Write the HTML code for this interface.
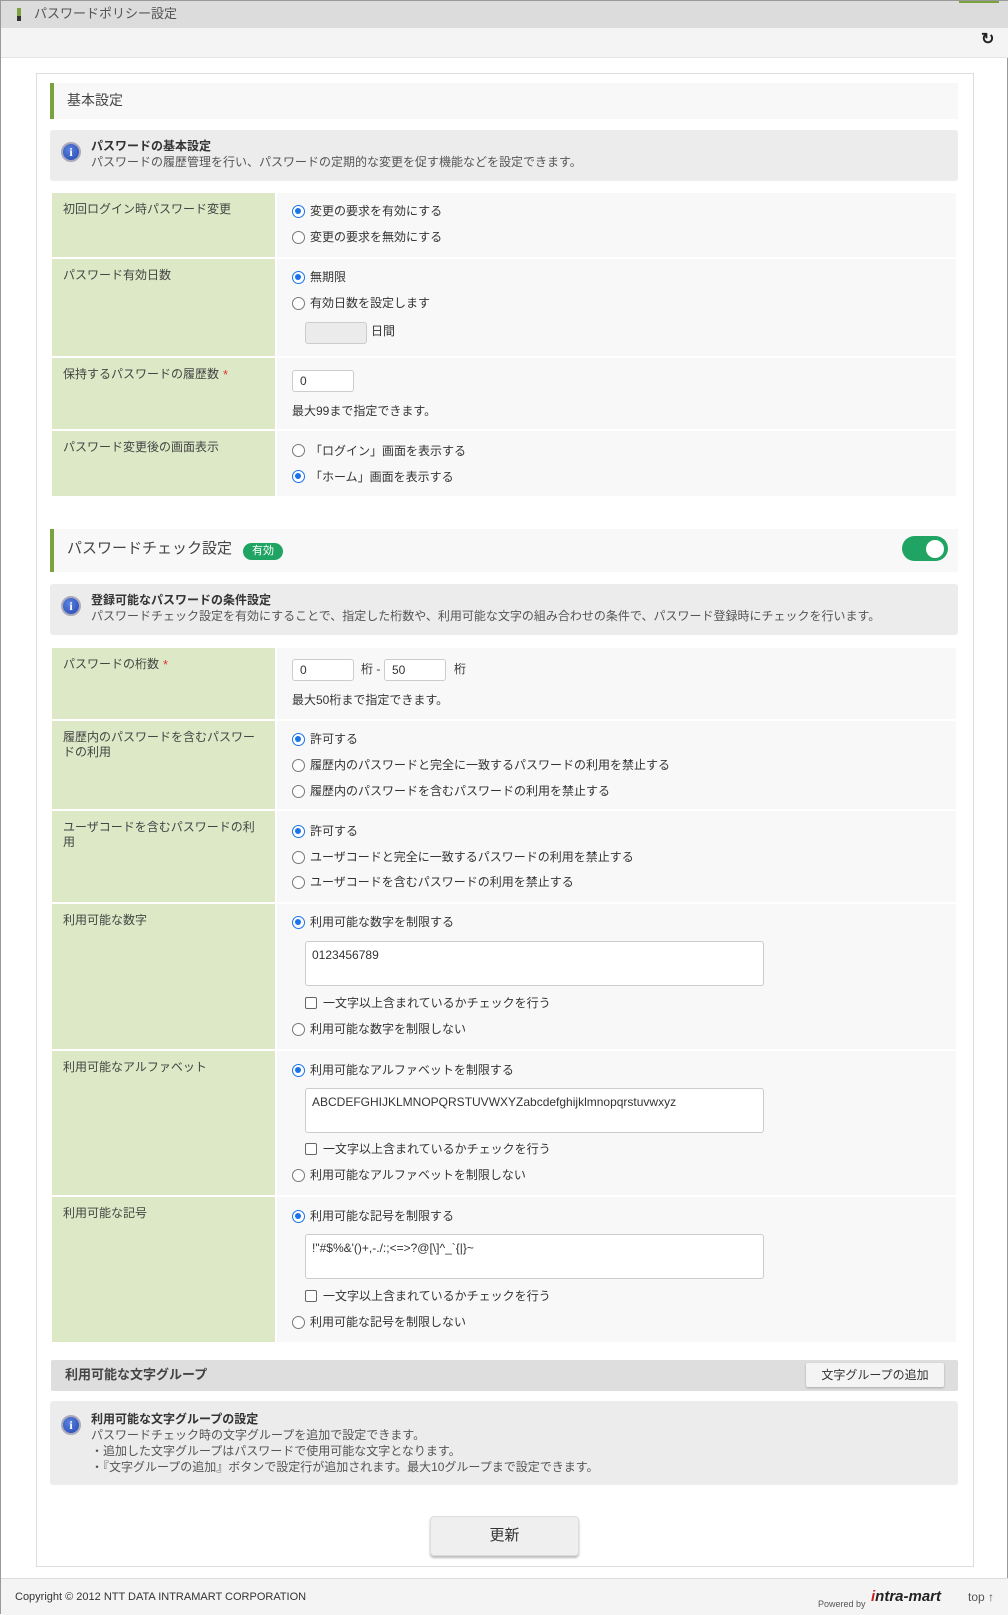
<!DOCTYPE html>
<html><head><meta charset="utf-8">
<style>
*{box-sizing:border-box;margin:0;padding:0}
body{width:1008px;height:1614px;position:relative;background:#fff;font-family:"Liberation Sans","Noto Sans CJK JP",sans-serif;font-size:12px;color:#333;overflow:hidden;border:1px solid #999}
.a{position:absolute}
.t{position:absolute;white-space:nowrap;line-height:14px}
.lab{position:absolute;left:51px;width:223px;background:#dde9c6}
.val{position:absolute;left:276px;width:679px;background:#f8f8f8}
.lt{position:absolute;left:11px;top:9px;line-height:15px;color:#444;font-size:12px}
.rd{position:absolute;width:13px;height:13px;border-radius:50%;border:1px solid #777;background:#fff}
.rd.on{border:1.5px solid #1a73e8}
.rd.on:after{content:"";position:absolute;left:2px;top:2px;width:6px;height:6px;border-radius:50%;background:#1a73e8}
.cb{position:absolute;width:12px;height:12px;border:1px solid #666;border-radius:2px;background:#fff}
.in{position:absolute;height:22px;border:1px solid #ccc;border-radius:3px;background:#fff;padding:3px 7px;line-height:14px;font-size:12px}
.ta{position:absolute;left:304px;width:459px;height:45px;border:1px solid #ccc;border-radius:3px;background:#fff;padding:6px 6px;font-size:12px}
.info{position:absolute;left:49px;width:908px;background:#ececec;border-radius:3px}
.ic{position:absolute;width:20px;height:20px;border-radius:50%;background:radial-gradient(circle at 40% 35%,#5a82e0,#2446b0);border:2px solid #aab;color:#fff;font:bold 12px/16px "Liberation Serif",serif;text-align:center}
.sh{position:absolute;left:49px;width:908px;background:#f8f8f8;border-left:4px solid #7aa33f}
.star{color:#d33;font-size:13px;margin-left:4px;vertical-align:top}
</style></head><body>
<!-- top bar -->
<div class="a" style="left:0;top:0;width:1008px;height:27px;background:#dcdcdc"></div>
<div class="a" style="left:16px;top:7px;width:4px;height:8px;background:#7aa33f"></div>
<div class="a" style="left:16px;top:15px;width:4px;height:5px;background:#333"></div>
<div class="t" style="left:33px;top:6px;font-size:13px;color:#555">パスワードポリシー設定</div>
<div class="a" style="left:958px;top:0;width:40px;height:2px;background:#7aa33f"></div>
<div class="a" style="left:0;top:27px;width:1008px;height:30px;background:#f4f4f4;border-bottom:1px solid #e4e4e4"></div>
<div class="t" style="left:980px;top:32px;font-size:16px;font-weight:bold;color:#222">&#x21bb;</div>
<!-- panel -->
<div class="a" style="left:35px;top:72px;width:938px;height:1494px;border:1px solid #ddd;background:#fff"></div>

<div class="sh" style="top:82px;height:36px"><div class="t" style="left:13px;top:10px;font-size:14px;color:#444">基本設定</div></div>
<div class="info" style="top:129px;height:51px">
 <div class="ic" style="left:11px;top:12px">i</div>
 <div class="t" style="left:41px;top:9px;font-weight:bold">パスワードの基本設定</div>
 <div class="t" style="left:41px;top:25px;color:#555">パスワードの履歴管理を行い、パスワードの定期的な変更を促す機能などを設定できます。</div>
</div>

<!-- rows 1 -->
<div class="lab" style="top:192px;height:64px"><div class="lt">初回ログイン時パスワード変更</div></div>
<div class="val" style="top:192px;height:64px"></div>
<div class="rd on" style="left:291px;top:204px"></div><div class="t" style="left:309px;top:203px">変更の要求を有効にする</div>
<div class="rd" style="left:291px;top:230px"></div><div class="t" style="left:309px;top:229px">変更の要求を無効にする</div>

<div class="lab" style="top:258px;height:97px"><div class="lt">パスワード有効日数</div></div>
<div class="val" style="top:258px;height:97px"></div>
<div class="rd on" style="left:291px;top:270px"></div><div class="t" style="left:309px;top:269px">無期限</div>
<div class="rd" style="left:291px;top:296px"></div><div class="t" style="left:309px;top:295px">有効日数を設定します</div>
<div class="in" style="left:304px;top:321px;width:62px;background:#ebebeb"></div><div class="t" style="left:370px;top:323px">日間</div>

<div class="lab" style="top:357px;height:71px"><div class="lt">保持するパスワードの履歴数<span class="star">*</span></div></div>
<div class="val" style="top:357px;height:71px"></div>
<div class="in" style="left:291px;top:369px;width:62px">0</div>
<div class="t" style="left:291px;top:403px">最大99まで指定できます。</div>

<div class="lab" style="top:430px;height:65px"><div class="lt">パスワード変更後の画面表示</div></div>
<div class="val" style="top:430px;height:65px"></div>
<div class="rd" style="left:291px;top:443px"></div><div class="t" style="left:309px;top:443px">「ログイン」画面を表示する</div>
<div class="rd on" style="left:291px;top:469px"></div><div class="t" style="left:309px;top:469px">「ホーム」画面を表示する</div>

<!-- section 2 -->
<div class="sh" style="top:528px;height:43px">
 <div class="t" style="left:13px;top:13px;font-size:15px;color:#444">パスワードチェック設定</div>
 <div class="a" style="left:189px;top:14px;width:40px;height:17px;border-radius:9px;background:#1fa463;color:#fff;font-size:11px;line-height:17px;text-align:center">有効</div>
</div>
<div class="a" style="left:901px;top:535px;width:46px;height:25px;border-radius:13px;background:#1fa463"></div>
<div class="a" style="left:925px;top:539px;width:18px;height:18px;border-radius:50%;background:#fff"></div>

<div class="info" style="top:583px;height:51px">
 <div class="ic" style="left:11px;top:12px">i</div>
 <div class="t" style="left:41px;top:9px;font-weight:bold">登録可能なパスワードの条件設定</div>
 <div class="t" style="left:41px;top:25px;color:#555">パスワードチェック設定を有効にすることで、指定した桁数や、利用可能な文字の組み合わせの条件で、パスワード登録時にチェックを行います。</div>
</div>

<div class="lab" style="top:647px;height:71px"><div class="lt">パスワードの桁数<span class="star">*</span></div></div>
<div class="val" style="top:647px;height:71px"></div>
<div class="in" style="left:291px;top:658px;width:62px">0</div><div class="t" style="left:360px;top:661px">桁 -</div>
<div class="in" style="left:383px;top:658px;width:62px">50</div><div class="t" style="left:453px;top:661px">桁</div>
<div class="t" style="left:291px;top:692px">最大50桁まで指定できます。</div>

<div class="lab" style="top:720px;height:88px"><div class="lt">履歴内のパスワードを含むパスワー<br>ドの利用</div></div>
<div class="val" style="top:720px;height:88px"></div>
<div class="rd on" style="left:291px;top:732px"></div><div class="t" style="left:309px;top:731px">許可する</div>
<div class="rd" style="left:291px;top:758px"></div><div class="t" style="left:309px;top:757px">履歴内のパスワードと完全に一致するパスワードの利用を禁止する</div>
<div class="rd" style="left:291px;top:784px"></div><div class="t" style="left:309px;top:783px">履歴内のパスワードを含むパスワードの利用を禁止する</div>

<div class="lab" style="top:810px;height:91px"><div class="lt">ユーザコードを含むパスワードの利<br>用</div></div>
<div class="val" style="top:810px;height:91px"></div>
<div class="rd on" style="left:291px;top:824px"></div><div class="t" style="left:309px;top:823px">許可する</div>
<div class="rd" style="left:291px;top:850px"></div><div class="t" style="left:309px;top:849px">ユーザコードと完全に一致するパスワードの利用を禁止する</div>
<div class="rd" style="left:291px;top:875px"></div><div class="t" style="left:309px;top:874px">ユーザコードを含むパスワードの利用を禁止する</div>

<div class="lab" style="top:903px;height:145px"><div class="lt">利用可能な数字</div></div>
<div class="val" style="top:903px;height:145px"></div>
<div class="rd on" style="left:291px;top:915px"></div><div class="t" style="left:309px;top:914px">利用可能な数字を制限する</div>
<div class="ta" style="top:940px">0123456789</div>
<div class="cb" style="left:304px;top:996px"></div><div class="t" style="left:322px;top:995px">一文字以上含まれているかチェックを行う</div>
<div class="rd" style="left:291px;top:1022px"></div><div class="t" style="left:309px;top:1021px">利用可能な数字を制限しない</div>

<div class="lab" style="top:1050px;height:144px"><div class="lt">利用可能なアルファベット</div></div>
<div class="val" style="top:1050px;height:144px"></div>
<div class="rd on" style="left:291px;top:1063px"></div><div class="t" style="left:309px;top:1062px">利用可能なアルファベットを制限する</div>
<div class="ta" style="top:1087px">ABCDEFGHIJKLMNOPQRSTUVWXYZabcdefghijklmnopqrstuvwxyz</div>
<div class="cb" style="left:304px;top:1142px"></div><div class="t" style="left:322px;top:1141px">一文字以上含まれているかチェックを行う</div>
<div class="rd" style="left:291px;top:1168px"></div><div class="t" style="left:309px;top:1167px">利用可能なアルファベットを制限しない</div>

<div class="lab" style="top:1196px;height:145px"><div class="lt">利用可能な記号</div></div>
<div class="val" style="top:1196px;height:145px"></div>
<div class="rd on" style="left:291px;top:1209px"></div><div class="t" style="left:309px;top:1208px">利用可能な記号を制限する</div>
<div class="ta" style="top:1233px">!"#$%&amp;'()+,-./:;&lt;=&gt;?@[\]^_`{|}~</div>
<div class="cb" style="left:304px;top:1289px"></div><div class="t" style="left:322px;top:1288px">一文字以上含まれているかチェックを行う</div>
<div class="rd" style="left:291px;top:1315px"></div><div class="t" style="left:309px;top:1314px">利用可能な記号を制限しない</div>

<!-- group -->
<div class="a" style="left:50px;top:1359px;width:907px;height:31px;background:#dedede;border-radius:2px"></div>
<div class="t" style="left:64px;top:1367px;font-weight:bold;font-size:13px;color:#444">利用可能な文字グループ</div>
<div class="a" style="left:805px;top:1362px;width:138px;height:24px;background:#f4f4f4;border-radius:2px;box-shadow:0 1px 2px #aaa;text-align:center;line-height:24px;font-size:12px;color:#333">文字グループの追加</div>

<div class="info" style="top:1400px;height:84px">
 <div class="ic" style="left:11px;top:14px">i</div>
 <div class="t" style="left:41px;top:11px;font-weight:bold">利用可能な文字グループの設定</div>
 <div class="t" style="left:41px;top:27px;color:#555">パスワードチェック時の文字グループを追加で設定できます。</div>
 <div class="t" style="left:41px;top:43px;color:#555">・追加した文字グループはパスワードで使用可能な文字となります。</div>
 <div class="t" style="left:41px;top:59px;color:#555">・『文字グループの追加』ボタンで設定行が追加されます。最大10グループまで設定できます。</div>
</div>

<div class="a" style="left:429px;top:1515px;width:149px;height:40px;background:#efefef;border:1px solid #ddd;border-radius:4px;box-shadow:0 2px 2px #bbb;text-align:center;line-height:38px;font-size:15px;color:#333">更新</div>

<!-- footer -->
<div class="a" style="left:0;top:1577px;width:1008px;height:37px;background:#f4f4f4;border-top:1px solid #ddd"></div>
<div class="t" style="left:14px;top:1589px;font-size:11px;color:#333">Copyright © 2012 NTT DATA INTRAMART CORPORATION</div>
<div class="t" style="left:817px;top:1596px;font-size:9px;color:#555">Powered by</div>
<div class="t" style="left:870px;top:1589px;font-size:15px;font-style:italic;font-weight:bold;color:#222"><span style="color:#c22">i</span>ntra-mart</div>
<div class="t" style="left:967px;top:1589px;font-size:12px;color:#555">top ↑</div>
</body></html>
